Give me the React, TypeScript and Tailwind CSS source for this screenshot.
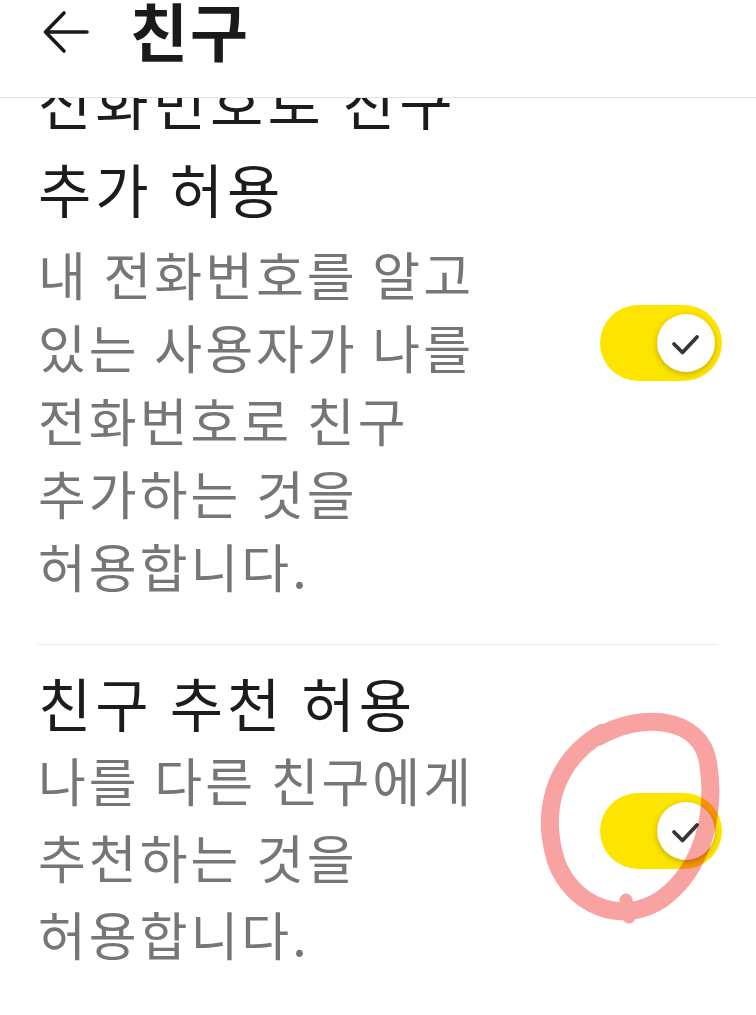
import React from "react";

const font = { fontFamily: '"Noto Sans CJK KR", "Noto Sans", sans-serif' };

const Toggle = ({ className = "" }: { className?: string }) => (
  <div
    className={`relative h-[76px] w-[122px] shrink-0 rounded-full bg-[#fee500] ${className}`}
  >
    <div className="absolute right-[7px] top-[9px] flex h-[58px] w-[58px] items-center justify-center rounded-full bg-white shadow-[0_2px_6px_rgba(0,0,0,0.25)]">
      <svg width="58" height="58" viewBox="0 0 58 58" fill="none">
        <path
          d="M17 30 L25.5 38.5 L40 23"
          stroke="#363636"
          strokeWidth="3.8"
          strokeLinecap="round"
          strokeLinejoin="round"
        />
      </svg>
    </div>
  </div>
);

export default function App() {
  return (
    <div
      className="relative h-[1015px] w-[756px] overflow-hidden bg-white"
      style={font}
    >
      <header className="relative z-10 h-[98px] border-b border-[#e3e3e3] bg-white">
        <div className="flex h-[58px] items-center">
          <svg
            width="48"
            height="48"
            viewBox="0 0 48 48"
            fill="none"
            className="ml-[42px] mt-[6px]"
          >
            <path
              d="M45 24 H4 M22 5 L3.5 24 L22 43"
              stroke="#1a1a1a"
              strokeWidth="3.6"
              strokeLinecap="round"
              strokeLinejoin="round"
            />
          </svg>
          <h1 className="ml-[40px] text-[63px] font-bold leading-[58px] tracking-[2px] text-[#1a1a1a]">
            친구
          </h1>
        </div>
      </header>

      <main className="h-[917px] overflow-hidden">
        <section className="-mt-[42px] flex pl-[38px] pr-[34px]">
          <div className="flex-1">
            <p className="text-[58px] leading-[88px] tracking-[4px] text-[#1c1c1c]">
              <span className="block">전화번호로 친구</span>
              <span className="block">추가 허용</span>
            </p>
            <p className="mt-[5px] text-[52px] leading-[73px] tracking-[3px] text-[#767676]">
              <span className="block">내 전화번호를 알고</span>
              <span className="block">있는 사용자가 나를</span>
              <span className="block">전화번호로 친구</span>
              <span className="block">추가하는 것을</span>
              <span className="block">허용합니다.</span>
            </p>
          </div>
          <Toggle className="mt-[249px] self-start" />
        </section>

        <div className="mx-[38px] mt-[42px] h-px bg-[#ebebeb]" />

        <section className="mt-[19px] flex pl-[38px] pr-[34px]">
          <div className="flex-1">
            <p className="text-[58px] leading-[77px] tracking-[4px] text-[#1c1c1c]">
              친구 추천 허용
            </p>
            <p className="text-[52px] leading-[77px] tracking-[3px] text-[#767676]">
              <span className="block">나를 다른 친구에게</span>
              <span className="block">추천하는 것을</span>
              <span className="block">허용합니다.</span>
            </p>
          </div>
          <Toggle className="mt-[129px] self-start" />
        </section>
      </main>

      <svg
        className="pointer-events-none absolute left-0 top-0 mix-blend-multiply"
        width="756"
        height="1015"
        viewBox="0 0 756 1015"
        fill="none"
      >
        <path
          d="M598 737 C640 712 700 716 708 762 C716 812 704 868 662 899 C622 926 572 906 556 861 C541 812 553 762 602 733"
          stroke="#f9a2a2"
          strokeWidth="18"
          strokeLinecap="round"
          strokeLinejoin="round"
        />
        <path
          d="M626 900 L629 917"
          stroke="#f9a2a2"
          strokeWidth="13"
          strokeLinecap="round"
        />
      </svg>
    </div>
  );
}
